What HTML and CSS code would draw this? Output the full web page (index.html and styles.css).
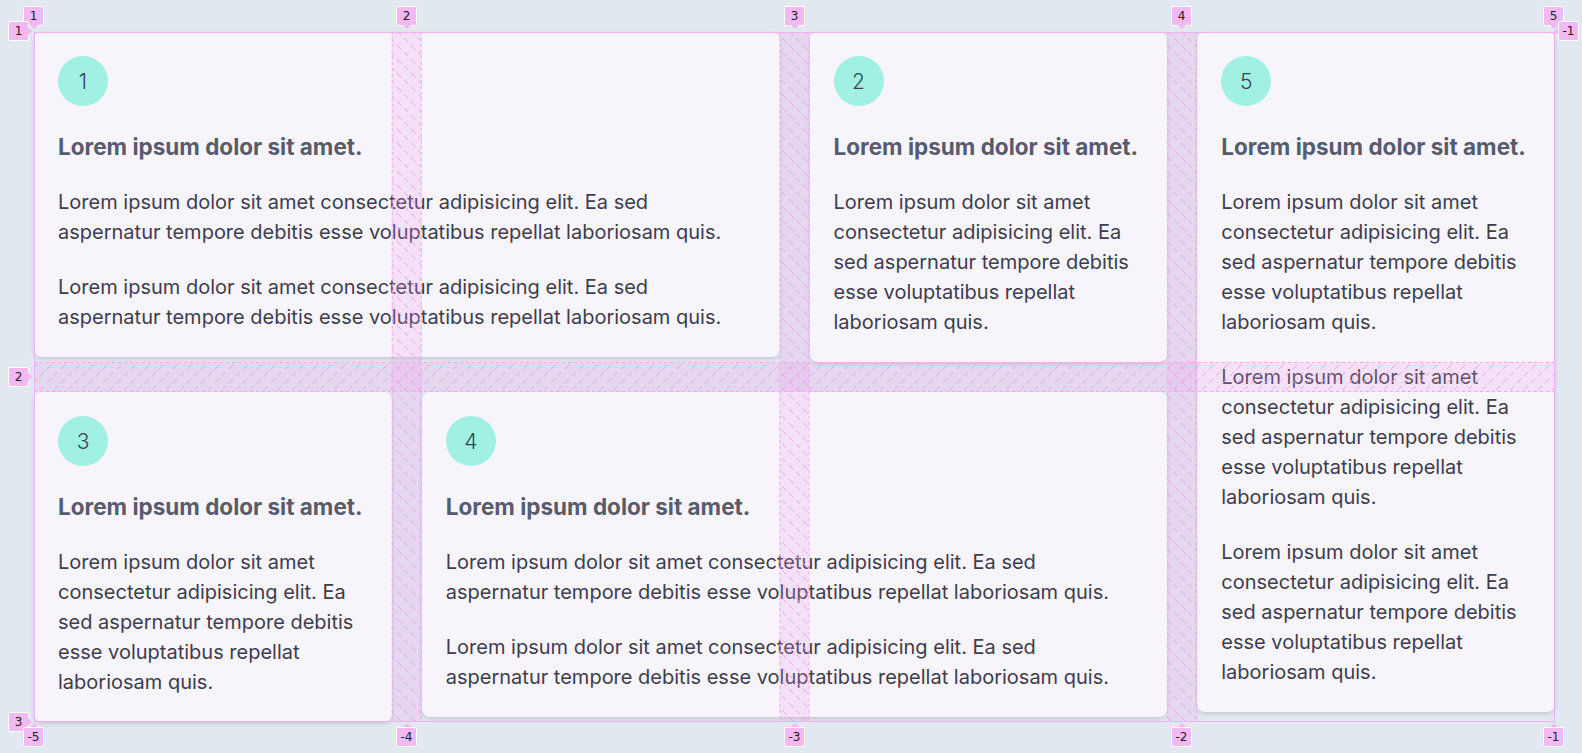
FILE: index.html
```html
<!DOCTYPE html>
<html lang="en">
<head>
<meta charset="utf-8">
<title>Grid</title>
<link rel="stylesheet" href="styles.css">
</head>
<body>
<div class="page">
  <div class="grid">
    <article class="card card-1">
      <div class="badge">1</div>
      <h2 class="title">Lorem ipsum dolor sit amet.</h2>
      <p class="text">Lorem ipsum dolor sit amet consectetur adipisicing elit. Ea sed aspernatur tempore debitis esse voluptatibus repellat laboriosam quis.</p>
      <p class="text">Lorem ipsum dolor sit amet consectetur adipisicing elit. Ea sed aspernatur tempore debitis esse voluptatibus repellat laboriosam quis.</p>
    </article>
    <article class="card card-2">
      <div class="badge">2</div>
      <h2 class="title">Lorem ipsum dolor sit amet.</h2>
      <p class="text">Lorem ipsum dolor sit amet consectetur adipisicing elit. Ea sed aspernatur tempore debitis esse voluptatibus repellat laboriosam quis.</p>
    </article>
    <article class="card card-5">
      <div class="badge">5</div>
      <h2 class="title">Lorem ipsum dolor sit amet.</h2>
      <p class="text">Lorem ipsum dolor sit amet consectetur adipisicing elit. Ea sed aspernatur tempore debitis esse voluptatibus repellat laboriosam quis.</p>
      <p class="text">Lorem ipsum dolor sit amet consectetur adipisicing elit. Ea sed aspernatur tempore debitis esse voluptatibus repellat laboriosam quis.</p>
      <p class="text">Lorem ipsum dolor sit amet consectetur adipisicing elit. Ea sed aspernatur tempore debitis esse voluptatibus repellat laboriosam quis.</p>
    </article>
    <article class="card card-3">
      <div class="badge">3</div>
      <h2 class="title">Lorem ipsum dolor sit amet.</h2>
      <p class="text">Lorem ipsum dolor sit amet consectetur adipisicing elit. Ea sed aspernatur tempore debitis esse voluptatibus repellat laboriosam quis.</p>
    </article>
    <article class="card card-4">
      <div class="badge">4</div>
      <h2 class="title">Lorem ipsum dolor sit amet.</h2>
      <p class="text">Lorem ipsum dolor sit amet consectetur adipisicing elit. Ea sed aspernatur tempore debitis esse voluptatibus repellat laboriosam quis.</p>
      <p class="text">Lorem ipsum dolor sit amet consectetur adipisicing elit. Ea sed aspernatur tempore debitis esse voluptatibus repellat laboriosam quis.</p>
    </article>

    <svg class="overlay" width="1521" height="690" xmlns="http://www.w3.org/2000/svg">
      <defs>
        <pattern id="hatch-col" patternUnits="userSpaceOnUse" width="14" height="14">
          <line x1="0" y1="0" x2="14" y2="14" stroke="#f0a2ee" stroke-width="1" stroke-dasharray="5 4"/>
        </pattern>
        <pattern id="hatch-row" patternUnits="userSpaceOnUse" width="14" height="14">
          <line x1="0" y1="14" x2="14" y2="0" stroke="#f0a2ee" stroke-width="1" stroke-dasharray="5 4"/>
        </pattern>
      </defs>
      <g>
        <rect x="357.75" y="0" width="30" height="690" fill="rgba(238,150,236,0.2)"/>
        <rect x="745.5" y="0" width="30" height="690" fill="rgba(238,150,236,0.2)"/>
        <rect x="1133.25" y="0" width="30" height="690" fill="rgba(238,150,236,0.2)"/>
        <rect x="0" y="330" width="1521" height="30" fill="rgba(238,150,236,0.2)"/>
        <rect x="357.75" y="0" width="30" height="690" fill="url(#hatch-col)"/>
        <rect x="745.5" y="0" width="30" height="690" fill="url(#hatch-col)"/>
        <rect x="1133.25" y="0" width="30" height="690" fill="url(#hatch-col)"/>
        <rect x="0" y="330" width="1521" height="30" fill="url(#hatch-row)"/>
      </g>
      <g fill="none" stroke="#f2a8f0" stroke-width="1" stroke-dasharray="3 3">
        <line x1="358.25" y1="0" x2="358.25" y2="690"/>
        <line x1="387.25" y1="0" x2="387.25" y2="690"/>
        <line x1="746" y1="0" x2="746" y2="690"/>
        <line x1="775" y1="0" x2="775" y2="690"/>
        <line x1="1133.75" y1="0" x2="1133.75" y2="690"/>
        <line x1="1162.75" y1="0" x2="1162.75" y2="690"/>
        <line x1="0" y1="330.5" x2="1521" y2="330.5"/>
        <line x1="0" y1="359.5" x2="1521" y2="359.5"/>
      </g>
      <rect x="0.5" y="0.5" width="1520" height="689" fill="none" stroke="#f2b0f0" stroke-width="1"/>
    </svg>
  </div>

  <span class="lbl lbl-down" style="left:23px;top:6px">1</span>
  <span class="lbl lbl-down" style="left:396px;top:6px">2</span>
  <span class="lbl lbl-down" style="left:784px;top:6px">3</span>
  <span class="lbl lbl-down" style="left:1171px;top:6px">4</span>
  <span class="lbl lbl-down" style="left:1543px;top:6px">5</span>

  <span class="lbl lbl-right" style="left:8px;top:21px">1</span>
  <span class="lbl lbl-right" style="left:8px;top:367px">2</span>
  <span class="lbl lbl-right" style="left:8px;top:712px">3</span>

  <span class="lbl lbl-up" style="left:23px;top:727px">-5</span>
  <span class="lbl lbl-up" style="left:396px;top:727px">-4</span>
  <span class="lbl lbl-up" style="left:784px;top:727px">-3</span>
  <span class="lbl lbl-up" style="left:1171px;top:727px">-2</span>
  <span class="lbl lbl-up" style="left:1543px;top:727px">-1</span>

  <span class="lbl lbl-left" style="left:1558px;top:21px">-1</span>
</div>
</body>
</html>
```

FILE: styles.css
```css
* {
  box-sizing: border-box;
}

html, body {
  margin: 0;
  padding: 0;
}

body {
  background: #e2e8f0;
  font-family: Inter, "Noto Sans", "Liberation Sans", sans-serif;
  width: 1582px;
  height: 753px;
  overflow: hidden;
}

.page {
  position: relative;
  width: 1582px;
  height: 753px;
  padding: 32px 0 0 34px;
}

.grid {
  position: relative;
  width: 1521px;
  display: grid;
  grid-template-columns: repeat(4, 1fr);
  gap: 30px;
  align-items: start;
}

.card {
  background: #f7f4fb;
  border-radius: 8px;
  padding: 24px 24px 25px;
  box-shadow: 0 2px 4px rgba(15, 23, 42, 0.14);
}

.card-1 { grid-column: 1 / 3; grid-row: 1; }
.card-2 { grid-column: 3; grid-row: 1; }
.card-5 { grid-column: 4; grid-row: 1 / 3; }
.card-3 { grid-column: 1; grid-row: 2; }
.card-4 { grid-column: 2 / 4; grid-row: 2; }

.badge {
  width: 50px;
  height: 50px;
  border-radius: 50%;
  background: #a1f0e4;
  color: #3b4250;
  font-size: 21px;
  font-weight: 300;
  display: flex;
  align-items: center;
  justify-content: center;
}

.title {
  margin: 24px 0 0;
  font-size: 22.5px;
  line-height: 33px;
  font-weight: 700;
  color: #575c6d;
}

.text {
  margin: 24px 0 0;
  font-size: 20px;
  line-height: 30px;
  color: #3d3d4e;
}

.text + .text {
  margin-top: 25px;
}

.overlay {
  position: absolute;
  left: 0;
  top: 0;
  pointer-events: none;
}

.lbl {
  position: absolute;
  width: 21px;
  height: 20px;
  background: #f2b9f2;
  border: 1px solid #ffffff;
  border-radius: 2px;
  font-family: "DejaVu Sans", "Liberation Sans", sans-serif;
  font-size: 12px;
  line-height: 18px;
  text-align: center;
  color: #222;
}

.lbl::after {
  content: "";
  position: absolute;
  width: 0;
  height: 0;
  border: 4px solid transparent;
}

.lbl-down::after {
  left: 50%;
  margin-left: -4px;
  top: 18px;
  border-top-color: #f2b9f2;
}

.lbl-up::after {
  left: 50%;
  margin-left: -4px;
  top: -9px;
  border-bottom-color: #f2b9f2;
}

.lbl-right::after {
  top: 50%;
  margin-top: -4px;
  left: 19px;
  border-left-color: #f2b9f2;
}

.lbl-left::after {
  top: 50%;
  margin-top: -4px;
  left: -9px;
  border-right-color: #f2b9f2;
}
```
